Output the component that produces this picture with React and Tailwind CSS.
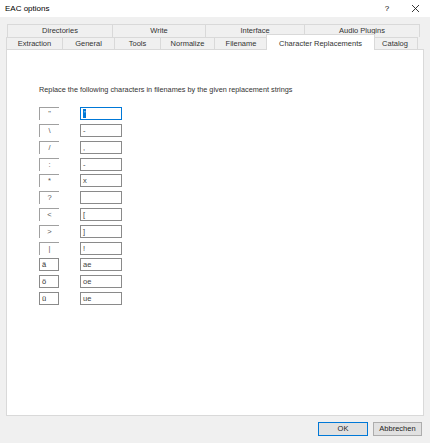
import React from "react";

const row1 = [
  { label: "Directories", w: 106 },
  { label: "Write", w: 94 },
  { label: "Interface", w: 100 },
  { label: "Audio Plugins", w: 116 },
];
const row2 = [
  { label: "Extraction", w: 57 },
  { label: "General", w: 53 },
  { label: "Tools", w: 47 },
  { label: "Normalize", w: 55 },
  { label: "Filename", w: 54 },
  { label: "Character Replacements", w: 105, sel: true },
  { label: "Catalog", w: 46 },
];

const rows = [
  { c: "\"", r: "'", first: true },
  { c: "\\", r: "-" },
  { c: "/", r: "," },
  { c: ":", r: "-" },
  { c: "*", r: "x" },
  { c: "?", r: "" },
  { c: "<", r: "[" },
  { c: ">", r: "]" },
  { c: "|", r: "!" },
  { c: "ä", r: "ae", full: true },
  { c: "ö", r: "oe", full: true },
  { c: "ü", r: "ue", full: true },
];

export default function App() {
  return (
    <div
      className="w-[430px] h-[443px] bg-[#f0f0f0] flex flex-col text-black overflow-hidden"
      style={{ fontFamily: '"Liberation Sans", Arial, sans-serif' }}
    >
      {/* title bar */}
      <div className="h-[17px] bg-white flex items-center pl-[5px] text-[8px]">
        <span className="flex-1 pt-[1px]">EAC options</span>
        <span className="w-[10px] text-center mr-[19px] text-[8px]">?</span>
        <svg width="9" height="9" viewBox="0 0 9 9" className="mr-[10px]">
          <path d="M1 1 L8 8 M8 1 L1 8" stroke="#222" strokeWidth="0.9" />
        </svg>
      </div>

      {/* tabs */}
      <div className="pl-[7px] mt-[7px] flex h-[13px]">
        {row1.map((t) => (
          <div
            key={t.label}
            style={{ width: t.w }}
            className="h-[13px] border border-[#d9d9d9] border-b-0 -ml-px first:ml-0 flex items-center justify-center text-[7.5px] text-[#333]"
          >
            {t.label}
          </div>
        ))}
      </div>
      <div className="pl-[6px] flex items-end h-[12px]">
        {row2.map((t) =>
          t.sel ? (
            <div
              key={t.label}
              style={{ width: t.w + 4 }}
              className="h-[16px] -mx-[2px] -mb-px relative z-10 bg-white border border-[#d9d9d9] border-b-0 flex items-start justify-center pt-[3px] text-[7.5px] text-[#333]"
            >
              {t.label}
            </div>
          ) : (
            <div
              key={t.label}
              style={{ width: t.w }}
              className="h-[12px] border border-[#d9d9d9] border-b-0 -ml-px first:ml-0 flex items-center justify-center text-[7.5px] text-[#333]"
            >
              {t.label}
            </div>
          )
        )}
      </div>

      {/* panel */}
      <div className="mx-[6px] h-[367px] bg-white border border-[#d9d9d9] pl-[32px] pt-[36px]">
        <div className="text-[7.3px] text-[#333] leading-none">
          Replace the following characters in filenames by the given replacement strings
        </div>
        <div className="mt-[14px] flex flex-col gap-[3.8px]">
          {rows.map((r, i) => (
            <div key={i} className="flex items-center h-[13px]">
              <div
                className={
                  "w-[20px] h-[13px] text-[7.5px] leading-[12px] " +
                  (r.full
                    ? "border border-[#8a8a8a] pl-[2px] text-[#333]"
                    : "border-t border-l border-[#a0a0a0] text-center text-[#555]")
                }
              >
                {r.c}
              </div>
              <div
                className={
                  "ml-[21px] w-[42px] h-[13px] border text-[7.5px] leading-[11px] pl-[2px] text-[#444] " +
                  (r.first ? "border-[#0078d7]" : "border-[#8a8a8a]")
                }
              >
                {r.first ? (
                  <span className="bg-[#0078d7] text-white px-[1px]">{r.r}</span>
                ) : (
                  r.r
                )}
              </div>
            </div>
          ))}
        </div>
      </div>

      {/* buttons */}
      <div className="flex justify-end gap-[5px] pr-[8px] mt-[6px]">
        <button className="w-[50px] h-[14px] bg-[#e1e1e1] border border-[#0078d7] text-[7.5px] text-[#222] leading-none">
          OK
        </button>
        <button className="w-[49px] h-[14px] bg-[#e1e1e1] border border-[#adadad] text-[7.5px] text-[#222] leading-none">
          Abbrechen
        </button>
      </div>
    </div>
  );
}
